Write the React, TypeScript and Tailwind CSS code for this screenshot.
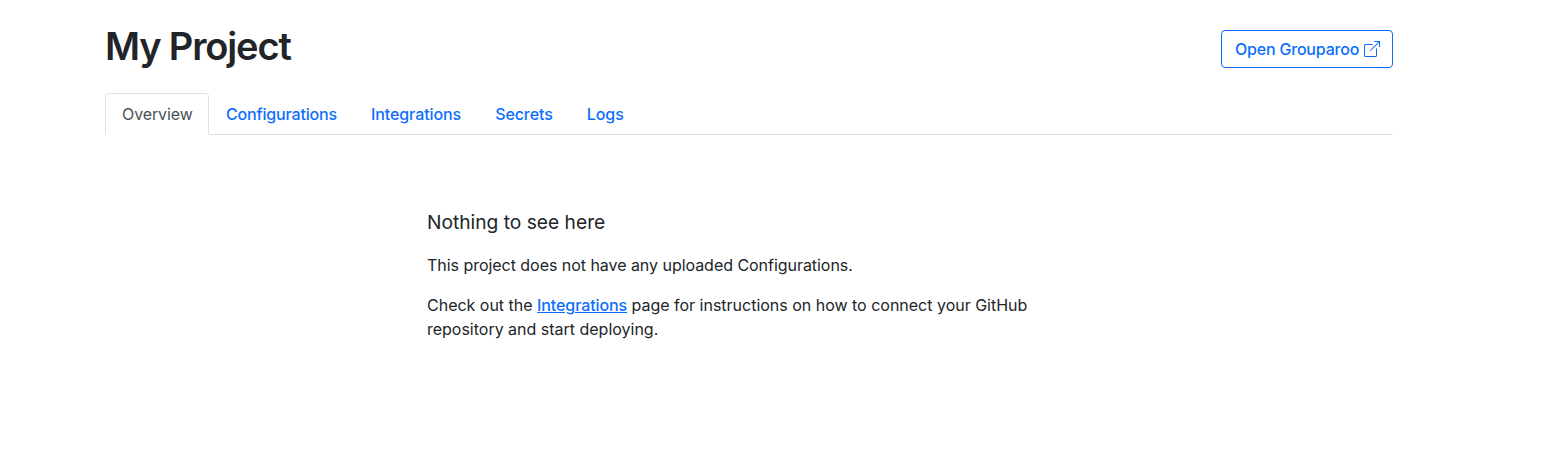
import React from "react";

const font = "font-['Inter','Liberation_Sans',sans-serif]";

export default function App() {
  return (
    <div className={`min-h-[469px] bg-white ${font} text-[#212529]`}>
      <div className="w-[1288px] ml-[105px] pt-[22px]">
        <div className="flex items-start justify-between h-[48px]">
          <h1 className="text-[38px] leading-[48px] font-semibold tracking-[-1.15px]">My Project</h1>
          <a className="flex items-center gap-[5px] h-[38px] mt-[8px] w-[172px] pl-[13px] border border-[#0d6efd] rounded-[4px] text-[#0d6efd] text-[16px] font-[450] tracking-[-0.2px]">
            Open Grouparoo
            <svg width="16" height="16" viewBox="0 0 16 16" fill="currentColor" className="shrink-0">
              <path fillRule="evenodd" d="M8.636 3.5a.5.5 0 0 0-.5-.5H1.5A1.5 1.5 0 0 0 0 4.5v10A1.5 1.5 0 0 0 1.5 16h10a1.5 1.5 0 0 0 1.5-1.5V7.864a.5.5 0 0 0-1 0V14.5a.5.5 0 0 1-.5.5h-10a.5.5 0 0 1-.5-.5v-10a.5.5 0 0 1 .5-.5h6.636a.5.5 0 0 0 .5-.5z" />
              <path fillRule="evenodd" d="M16 .5a.5.5 0 0 0-.5-.5h-5a.5.5 0 0 0 0 1h3.793L6.146 9.146a.5.5 0 1 0 .708.708L15 1.707V5.5a.5.5 0 0 0 1 0v-5z" />
            </svg>
          </a>
        </div>
        <div className="flex mt-[23px] h-[42px] border-b border-[#dee2e6] text-[16px]">
          <div className="h-[42px] w-[104px] pl-[16px] flex items-center border border-[#dee2e6] border-b-white rounded-t-[4px] text-[#495057] bg-white tracking-[-0.1px]">Overview</div>
          <div className="h-[41px] px-[17px] flex items-center text-[#0d6efd] font-[450] tracking-[-0.17px]">Configurations</div>
          <div className="h-[41px] px-[17px] flex items-center text-[#0d6efd] font-[450] tracking-[-0.08px]">Integrations</div>
          <div className="h-[41px] px-[17px] flex items-center text-[#0d6efd] font-[450] tracking-[-0.08px]">Secrets</div>
          <div className="h-[41px] px-[17px] flex items-center text-[#0d6efd] font-[450] tracking-[-0.08px]">Logs</div>
        </div>
        <div className="ml-[322px] w-[644px] mt-[75px]">
          <h5 className="text-[19.2px] leading-[24px] font-normal">Nothing to see here</h5>
          <p className="text-[16px] leading-[24px] mt-[19px] tracking-[-0.04px]">This project does not have any uploaded Configurations.</p>
          <p className="text-[16px] leading-[24px] mt-[16px] tracking-[-0.01px]">
            Check out the <a className="text-[#0d6efd] underline font-[450] tracking-[-0.1px]">Integrations</a> page for instructions on how to connect your GitHub repository and start deploying.
          </p>
        </div>
      </div>
    </div>
  );
}
